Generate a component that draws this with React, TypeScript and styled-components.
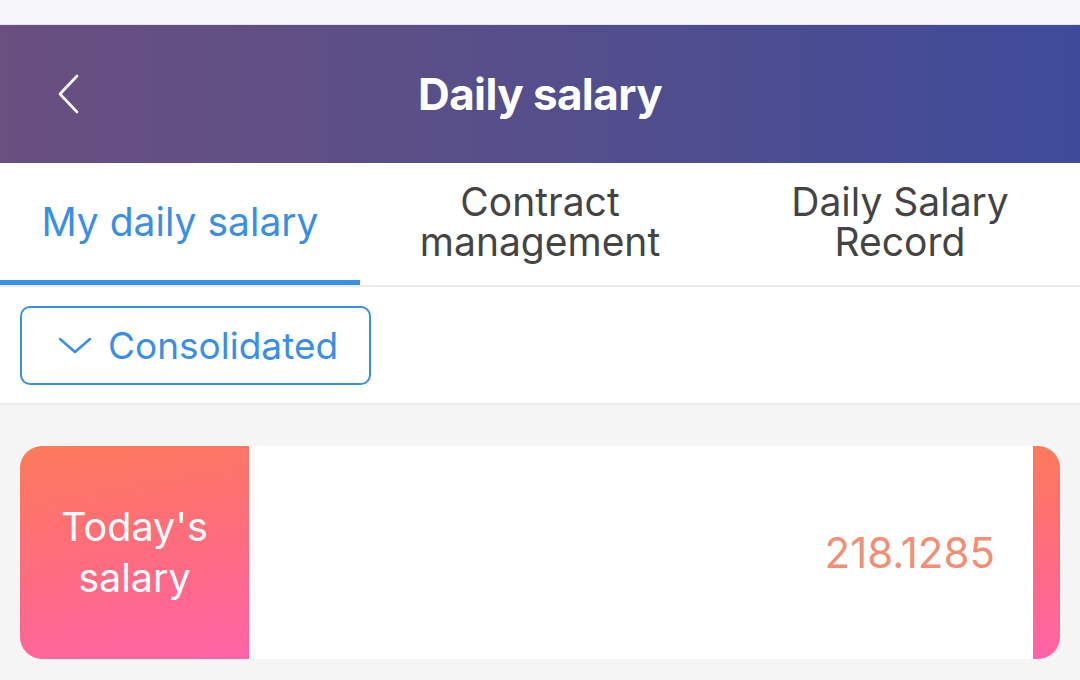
import styled, { createGlobalStyle } from 'styled-components';

const GlobalStyle = createGlobalStyle`
  body {
    margin: 0;
    background: #f5f5f5;
    font-family: Inter, "Noto Sans", sans-serif;
  }
`;

const colors = {
  blue: '#3a8ee4',
  text: '#444444',
  salary: '#ef8f78',
};

export default function App() {
  return (
    <Page>
      <GlobalStyle />
      <StatusStrip />
      <Header>
        <BackButton aria-label="Back">
          <svg width="26" height="40" viewBox="0 0 26 40" fill="none">
            <path d="M22 2 L5 20 L22 38" stroke="#fff" strokeWidth="2.6" strokeLinecap="round" strokeLinejoin="round" />
          </svg>
        </BackButton>
        <h1 className="title">Daily salary</h1>
      </Header>

      <Tabs>
        <Tab $active>My daily salary</Tab>
        <Tab>Contract<br />management</Tab>
        <Tab>Daily Salary<br />Record</Tab>
      </Tabs>

      <FilterBar>
        <Dropdown>
          <svg width="34" height="20" viewBox="0 0 34 20" fill="none">
            <path d="M2 4 L17 17 L32 4" stroke={colors.blue} strokeWidth="2.5" strokeLinecap="round" strokeLinejoin="round" />
          </svg>
          Consolidated
        </Dropdown>
      </FilterBar>

      <Content>
        <SalaryCard>
          <CardLabel>Today's<br />salary</CardLabel>
          <CardValue>218.1285</CardValue>
          <CardEdge />
        </SalaryCard>
      </Content>
    </Page>
  );
}

const Page = styled.div`
  width: 1080px;
  min-height: 680px;
  background: #f5f5f5;
`;

const StatusStrip = styled.div`
  height: 24px;
  background: #f7f7fa;
  border-bottom: 1px solid #e4e2ea;
`;

const Header = styled.header`
  position: relative;
  height: 138px;
  display: flex;
  align-items: center;
  justify-content: center;
  background: linear-gradient(90deg, #6a4f80 0%, #5a4f88 40%, #3f4b9a 100%);

  .title {
    margin: 0;
    color: #fff;
    font-size: 44px;
    font-weight: 700;
    letter-spacing: -0.6px;
  }
`;

const BackButton = styled.button`
  position: absolute;
  left: 55px;
  top: 50%;
  transform: translateY(-50%);
  display: flex;
  padding: 0;
  border: none;
  background: none;
`;

const Tabs = styled.nav`
  display: grid;
  grid-template-columns: repeat(3, 1fr);
  height: 122px;
  background: #fff;
  border-bottom: 2px solid #ececec;
`;

const Tab = styled.div<{ $active?: boolean }>`
  display: flex;
  align-items: center;
  justify-content: center;
  text-align: center;
  font-size: 39px;
  line-height: 40px;
  color: ${p => (p.$active ? colors.blue : colors.text)};
  box-shadow: ${p => (p.$active ? `inset 0 -5px 0 ${colors.blue}` : 'none')};
  padding-bottom: 4px;
`;

const FilterBar = styled.div`
  height: 116px;
  padding: 0 20px;
  display: flex;
  align-items: center;
  background: #fff;
  border-bottom: 2px solid #ececec;
`;

const Dropdown = styled.button`
  display: flex;
  align-items: center;
  gap: 16px;
  height: 79px;
  width: 351px;
  padding: 0 0 0 36px;
  box-sizing: border-box;
  border: 2.5px solid ${colors.blue};
  border-radius: 10px;
  background: #fff;
  font-family: inherit;
  font-size: 37px;
  color: ${colors.blue};
`;

const Content = styled.main`
  padding: 41px 20px;
`;

const SalaryCard = styled.div`
  display: flex;
  height: 213px;
  border-radius: 22px;
  overflow: hidden;
  background: #fff;
`;

const CardLabel = styled.div`
  width: 229px;
  display: flex;
  align-items: center;
  justify-content: center;
  text-align: center;
  color: #fff;
  font-size: 39.5px;
  line-height: 51px;
  background: linear-gradient(170deg, #fd7a5a 0%, #fe6a86 60%, #ff64a8 100%);
`;

const CardValue = styled.div`
  flex: 1;
  display: flex;
  align-items: center;
  justify-content: flex-end;
  padding-right: 38px;
  font-size: 42px;
  color: ${colors.salary};
`;

const CardEdge = styled.div`
  width: 27px;
  background: linear-gradient(180deg, #fd7a5a 0%, #fe6a86 60%, #ff64a8 100%);
`;
